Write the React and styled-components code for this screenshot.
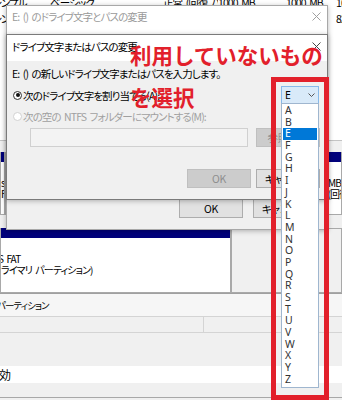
import React from "react";
import styled, { createGlobalStyle } from "styled-components";

const UI_FONT = `"Noto Sans CJK JP", "Noto Sans", sans-serif`;
const LATIN_FONT = `"Noto Sans", "Open Sans", sans-serif`;
const RED = "#e2202b";

const GlobalStyle = createGlobalStyle`
  html, body { margin: 0; padding: 0; background: #f0f0f0; }
  body { font-family: ${UI_FONT}; }
  *, *::before, *::after { box-sizing: border-box; }
`;

const Page = styled.div`
  position: relative;
  width: 342px;
  height: 400px;
  overflow: hidden;
  background: #f0f0f0;
  font-family: ${UI_FONT};
  font-size: 10.5px;
  font-feature-settings: "palt";
  letter-spacing: -0.9px;
  word-spacing: 2px;
  color: #000;
`;

/* ---------- background: disk management ---------- */
const Backdrop = styled.div`
  display: flex;
  flex-direction: column;
  width: 100%;
`;

const VolumeList = styled.div`
  height: 140px;
  background: #fff;
  overflow: hidden;
`;

const VolumeRow = styled.div`
  display: grid;
  grid-template-columns: 58px 113px 55px 68px 50px 40px;
  align-items: center;
  height: 16px;
  margin-left: -8px;
  white-space: nowrap;
  &:first-child {
    margin-top: -6px;
  }
`;

const Cell = styled.span`
  min-width: 0;
  overflow: hidden;
  padding-right: 3px;
`;

const Splitter = styled.div`
  height: 12px;
  border-top: 1px solid #c4c4c4;
  background: #f0f0f0;
`;

const DiskRow = styled.div`
  display: grid;
  grid-template-columns: ${(p) => p.$cols};
  height: ${(p) => p.$h}px;
`;

const Partition = styled.div`
  display: flex;
  flex-direction: column;
  min-width: 0;
  overflow: hidden;
  background: ${(p) => (p.$empty ? "#f0f0f0" : "#fff")};
  border: 1px solid #a9a9a9;
  border-top: ${(p) => (p.$empty ? "1px solid #a9a9a9" : "none")};
`;

const PartitionBar = styled.div`
  height: 10px;
  flex: none;
  background: #00007b;
`;

const PartitionText = styled.div`
  padding: 3px 0 0 ${(p) => p.$pad ?? 4}px;
  font-size: 10px;
  line-height: 11.5px;
  white-space: nowrap;
`;

const PartLine = styled.div`
  height: 11.5px;
  margin-left: ${(p) => p.$shift ?? 0}px;
`;

const DiskGap = styled.div`
  height: 13px;
`;

const Legend = styled.div`
  display: flex;
  flex-direction: column;
  border-top: 1px solid #a0a0a0;
`;

const LegendRow = styled.div`
  display: flex;
  align-items: center;
  height: 22px;
  background: #f6f6f6;
  font-size: 9.5px;
  white-space: nowrap;
`;

const LegendText = styled.span`
  margin-left: -3px;
`;

const StatusRow = styled.div`
  display: grid;
  grid-template-columns: 204px 1fr;
  height: 17px;
  border-top: 1px solid #d4d4d4;
  border-bottom: 1px solid #d4d4d4;
  background: #f0f0f0;
`;

const StatusCell = styled.div`
  border-right: 1px solid #d4d4d4;
`;

const Spacer = styled.div`
  height: ${(p) => p.$h}px;
`;

const WhiteRow = styled.div`
  display: flex;
  align-items: center;
  height: 17px;
  background: #fff;
  font-size: 12px;
`;

const WhiteRowText = styled.span`
  margin-left: -1px;
`;

const BottomRow = styled.div`
  height: 15px;
  border-bottom: 1px solid #a8a8a8;
`;

/* ---------- dialog windows ---------- */
const Window = styled.div`
  position: absolute;
  left: ${(p) => p.$x}px;
  top: ${(p) => p.$y}px;
  width: ${(p) => p.$w}px;
  height: ${(p) => p.$h}px;
  display: flex;
  flex-direction: column;
  background: #f0f0f0;
  border: 1px solid ${(p) => (p.$active ? "#7a7a7a" : "#a8a8a8")};
  box-shadow: 0 1px 5px rgba(0, 0, 0, 0.28);
`;

const TitleBar = styled.div`
  flex: none;
  display: flex;
  align-items: center;
  justify-content: space-between;
  height: ${(p) => p.$h}px;
  padding: 0 6px ${(p) => p.$pb}px 5px;
  background: #fff;
  color: ${(p) => (p.$active ? "#000" : "#9a9a9a")};
  white-space: nowrap;
`;

const CloseIcon = ({ color }) => (
  <svg width="9" height="9" viewBox="0 0 9 9">
    <path d="M0.5 0.5 L8.5 8.5 M8.5 0.5 L0.5 8.5" stroke={color} strokeWidth="1" fill="none" />
  </svg>
);

const DialogBody = styled.div`
  flex: 1;
  display: flex;
  flex-direction: column;
  padding: 0 7px 0 5px;
`;

const Prompt = styled.div`
  margin-top: 6px;
  height: 14px;
  line-height: 14px;
  white-space: nowrap;
`;

const RadioRow = styled.div`
  display: flex;
  align-items: center;
  height: 14px;
  margin-top: 7px;
  white-space: nowrap;
  color: ${(p) => (p.$disabled ? "#a0a0a0" : "#000")};
`;

const Radio = styled.span`
  flex: none;
  position: relative;
  width: 9px;
  height: 9px;
  margin: 0 1px 0 1px;
  border-radius: 50%;
  border: 1px solid ${(p) => (p.$disabled ? "#d2d2d2" : "#333")};
  background: #fff;
  &::after {
    content: "";
    display: ${(p) => (p.$checked ? "block" : "none")};
    position: absolute;
    left: 1.5px;
    top: 1.5px;
    width: 4px;
    height: 4px;
    border-radius: 50%;
    background: #111;
  }
`;

const InputRow = styled.div`
  display: flex;
  align-items: stretch;
  height: 19px;
  margin-top: 5px;
  padding-left: 18px;
  gap: 8px;
`;

const TextField = styled.div`
  flex: 1;
  background: #f3f3f3;
  border: 1px solid #d0d0d0;
`;

const Button = styled.div`
  flex: none;
  display: flex;
  align-items: center;
  justify-content: center;
  width: 64px;
  height: ${(p) => p.$h ?? 19}px;
  font-family: ${UI_FONT};
  font-size: 10.5px;
  letter-spacing: -0.3px;
  white-space: nowrap;
  overflow: hidden;
  background: ${(p) => (p.$disabled ? "#cccccc" : "#e1e1e1")};
  border: 1px solid ${(p) => (p.$disabled ? "#bfbfbf" : "#adadad")};
  color: ${(p) => (p.$disabled ? "#8e8e8e" : "#000")};
`;

const ButtonRow = styled.div`
  display: flex;
  justify-content: flex-end;
  gap: ${(p) => p.$gap}px;
  margin-top: ${(p) => p.$mt ?? 0}px;
  padding: ${(p) => p.$pad ?? "0"};
`;

/* ---------- combo box with open list ---------- */
const Combo = styled.div`
  position: relative;
  flex: none;
  display: flex;
  align-items: center;
  justify-content: space-between;
  width: 38px;
  height: 18px;
  margin-left: auto;
  margin-right: 1px;
  padding: 0 3px;
  background: #d9eaf9;
  border: 1px solid #86b9ea;
  font-family: ${LATIN_FONT};
  font-size: 10.5px;
  letter-spacing: 0;
  color: #000;
`;

const DropList = styled.ul`
  position: absolute;
  left: -1px;
  top: 16px;
  width: 38px;
  margin: 0;
  padding: 1px 0;
  list-style: none;
  background: #fff;
  border: 1px solid #9fb6cf;
  z-index: 5;
`;

const DropItem = styled.li`
  height: 11.7px;
  line-height: 11.7px;
  margin: 0 1px;
  padding-left: 2px;
  font-family: ${LATIN_FONT};
  font-size: 10.5px;
  color: ${(p) => (p.$selected ? "#fff" : "#333")};
  background: ${(p) => (p.$selected ? "#0078d7" : "transparent")};
`;

/* ---------- annotation ---------- */
const Highlight = styled.div`
  position: absolute;
  left: 271px;
  top: 77px;
  width: 58px;
  height: 323px;
  border: 5px solid ${RED};
  z-index: 10;
  pointer-events: none;
`;

const Callout = styled.div`
  position: absolute;
  left: 130px;
  top: 34px;
  display: flex;
  flex-direction: column;
  z-index: 10;
  font-family: ${UI_FONT};
  font-weight: 700;
  font-size: 21.5px;
  line-height: 41.5px;
  letter-spacing: 0;
  word-spacing: 0;
  font-feature-settings: normal;
  color: ${RED};
  white-space: nowrap;
`;

const letters = ["A", "B", "E", "F", "G", "H", "I", "J", "K", "L", "M", "N", "O", "P", "Q", "R", "S", "T", "U", "V", "W", "X", "Y", "Z"];

export default function App() {
  return (
    <>
      <GlobalStyle />
      <Page>
        <Backdrop>
          <VolumeList>
            <VolumeRow>
              <Cell>シンプル</Cell>
              <Cell>ベーシック</Cell>
              <Cell>正常 (回復 パーティション)</Cell>
              <Cell>1000 MB</Cell>
              <Cell>1000 MB</Cell>
              <Cell>100 %</Cell>
            </VolumeRow>
            <VolumeRow>
              <Cell>シンプル</Cell>
              <Cell>ベーシック</Cell>
              <Cell>正常 (ブート, ページ ファイル)</Cell>
              <Cell>29.45 GB</Cell>
              <Cell>24.17 GB</Cell>
              <Cell>82 %</Cell>
            </VolumeRow>
          </VolumeList>
          <Splitter />
          <DiskRow $cols="5px 1fr 41px" $h={63}>
            <Partition>
              <PartitionBar />
              <PartitionText $pad={0}>
                <PartLine />
                <PartLine>s</PartLine>
                <PartLine>FI</PartLine>
              </PartitionText>
            </Partition>
            <Partition>
              <PartitionBar />
            </Partition>
            <Partition>
              <PartitionBar />
              <PartitionText>
                <PartLine />
                <PartLine>1000 MB</PartLine>
                <PartLine>正常 (回復 パーティション)</PartLine>
              </PartitionText>
            </Partition>
          </DiskRow>
          <DiskGap />
          <DiskRow $cols="231px 1fr" $h={65}>
            <Partition>
              <PartitionBar />
              <PartitionText $pad={0}>
                <PartLine />
                <PartLine $shift={-3}>S FAT</PartLine>
                <PartLine>ライマリ パーティション)</PartLine>
              </PartitionText>
            </Partition>
            <Partition $empty />
          </DiskRow>
          <Legend>
            <LegendRow>
              <LegendText>パーティション</LegendText>
            </LegendRow>
            <StatusRow>
              <StatusCell />
              <div />
            </StatusRow>
          </Legend>
          <Spacer $h={33} />
          <WhiteRow>
            <WhiteRowText>効</WhiteRowText>
          </WhiteRow>
          <BottomRow />
        </Backdrop>

        {/* outer dialog */}
        <Window $x={6} $y={5} $w={322} $h={225}>
          <TitleBar $h={28} $pb={8}>
            <span>E: () のドライブ文字とパスの変更</span>
            <CloseIcon color="#a0a0a0" />
          </TitleBar>
          <DialogBody />
          <ButtonRow $gap={10} $pad="0 10px 11px 0">
            <Button $h={20}>OK</Button>
            <Button $h={20}>キャンセル</Button>
          </ButtonRow>
        </Window>

        {/* inner dialog */}
        <Window $x={6} $y={34} $w={322} $h={166} $active>
          <TitleBar $h={26} $pb={3} $active>
            <span>ドライブ文字またはパスの変更</span>
            <CloseIcon color="#444" />
          </TitleBar>
          <DialogBody>
            <Prompt>E: () の新しいドライブ文字またはパスを入力します。</Prompt>
            <RadioRow>
              <Radio $checked />
              <span>次のドライブ文字を割り当てる(A):</span>
              <Combo>
                <span>E</span>
                <svg width="7" height="4" viewBox="0 0 7 4">
                  <path d="M0.5 0.5 L3.5 3.5 L6.5 0.5" stroke="#555" strokeWidth="1" fill="none" />
                </svg>
                <DropList>
                  {letters.map((l) => (
                    <DropItem key={l} $selected={l === "E"}>
                      {l}
                    </DropItem>
                  ))}
                </DropList>
              </Combo>
            </RadioRow>
            <RadioRow $disabled>
              <Radio $disabled />
              <span>次の空の NTFS フォルダーにマウントする(M):</span>
            </RadioRow>
            <InputRow>
              <TextField />
              <Button $disabled>参照(R)...</Button>
            </InputRow>
            <ButtonRow $gap={5} $mt={22}>
              <Button $disabled>OK</Button>
              <Button>キャンセル</Button>
            </ButtonRow>
          </DialogBody>
        </Window>

        <Highlight />
        <Callout>
          <span>利用していないもの</span>
          <span>を選択</span>
        </Callout>
      </Page>
    </>
  );
}
